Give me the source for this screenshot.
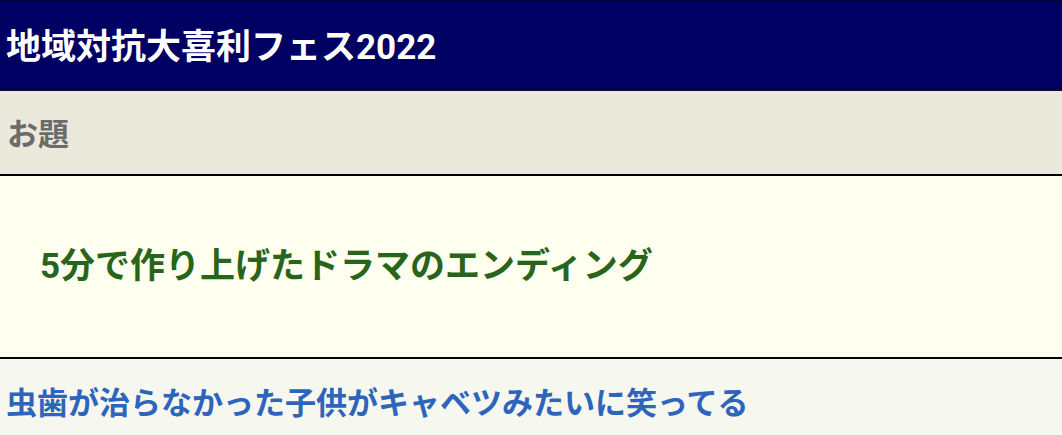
<main>
  <header><h1>地域対抗大喜利フェス2022</h1></header>
  <h2>お題</h2>
  <p class="topic">5分で作り上げたドラマのエンディング</p>
  <div class="answer"><a href="#answer">虫歯が治らなかった子供がキャベツみたいに笑ってる</a></div>
</main>

<style>
  :global(body) {
    margin: 0;
    background: #f6f7ef;
  }
  main {
    font-family: Roboto, "Noto Sans CJK JP", sans-serif;
    font-weight: 700;
    line-height: 50px;
    overflow: hidden;
  }
  header {
    background: #000062;
    border-top: 1px solid #000034;
    border-bottom: 1px solid #15101c;
    padding: 22px 6px 17px;
  }
  h1 {
    margin: 0;
    font-size: 35px;
    color: #fff;
  }
  h2 {
    margin: 0;
    padding: 19px 7px 14px;
    background: #ebe8dc;
    border-bottom: 2px solid #000;
    font-size: 31px;
    color: #6b6b6b;
  }
  .topic {
    margin: 0;
    padding: 66px 40px 65px;
    background: #fffff0;
    border-bottom: 2px solid #000;
    font-size: 35px;
    color: #29641b;
  }
  .answer {
    padding: 20px 6px 7px;
    background: #f6f7ef;
    font-size: 31px;
  }
  a {
    color: #2d64bc;
    text-decoration: none;
  }
</style>
